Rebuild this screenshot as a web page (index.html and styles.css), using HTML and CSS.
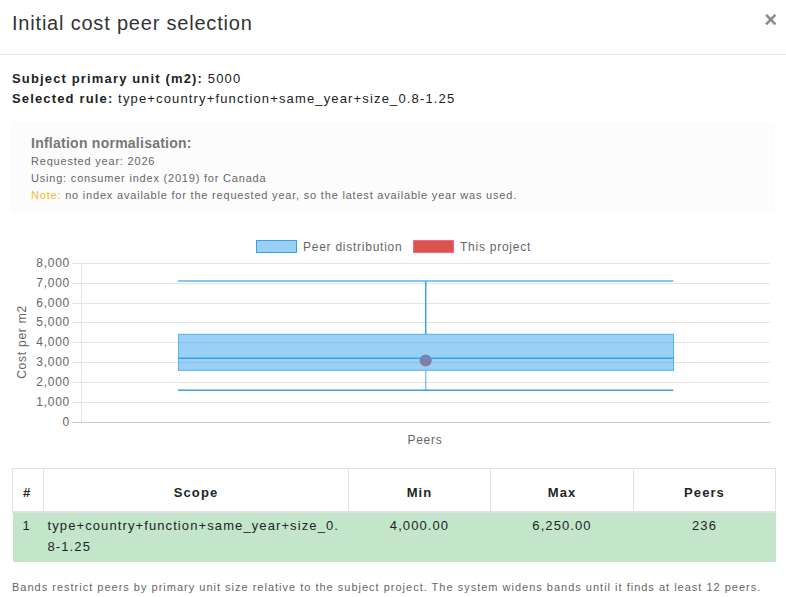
FILE: index.html
```html
<!DOCTYPE html>
<html>
<head>
<meta charset="utf-8">
<link rel="stylesheet" href="styles.css">
</head>
<body>
<div class="modal">
  <div class="modal-header">
    <h4 class="modal-title">Initial cost peer selection</h4>
    <span class="close">&times;</span>
  </div>
  <div class="modal-body">
    <div class="info-line"><b>Subject primary unit (m2):</b> 5000</div>
    <div class="info-line"><b>Selected rule:</b> type+country+function+same_year+size_0.8-1.25</div>

    <div class="inflation">
      <div class="infl-title">Inflation normalisation:</div>
      <div class="infl-line">Requested year: 2026</div>
      <div class="infl-line">Using: consumer index (2019) for Canada</div>
      <div class="infl-line"><span class="note">Note:</span> no index available for the requested year, so the latest available year was used.</div>
    </div>

    <svg class="chart" width="764" height="220" viewBox="0 0 764 220">
      <g class="legend">
        <rect x="244.5" y="10.5" width="40" height="12" fill="#9bd0f5" stroke="#36a2eb" stroke-width="1"/>
        <text x="291" y="20.5">Peer distribution</text>
        <rect x="401.5" y="10.5" width="40" height="12" fill="#d9534f" stroke="#ff6384" stroke-width="1"/>
        <text x="448" y="20.5">This project</text>
      </g>
      <g class="grid" stroke="#e5e5e5" stroke-width="1">
        <line x1="60" y1="33.5" x2="758" y2="33.5"/>
        <line x1="60" y1="53.5" x2="758" y2="53.5"/>
        <line x1="60" y1="73.5" x2="758" y2="73.5"/>
        <line x1="60" y1="92.5" x2="758" y2="92.5"/>
        <line x1="60" y1="112.5" x2="758" y2="112.5"/>
        <line x1="60" y1="132.5" x2="758" y2="132.5"/>
        <line x1="60" y1="152.5" x2="758" y2="152.5"/>
        <line x1="60" y1="172.5" x2="758" y2="172.5"/>
        <line x1="69.5" y1="33" x2="69.5" y2="192"/>
      </g>
      <line x1="60" y1="192.5" x2="758" y2="192.5" stroke="#cccccc" stroke-width="1"/>
      <g class="ylabels">
        <text x="58" y="37">8,000</text>
        <text x="58" y="57">7,000</text>
        <text x="58" y="77">6,000</text>
        <text x="58" y="96">5,000</text>
        <text x="58" y="116">4,000</text>
        <text x="58" y="136">3,000</text>
        <text x="58" y="156">2,000</text>
        <text x="58" y="176">1,000</text>
        <text x="58" y="196">0</text>
      </g>
      <text class="ytitle" transform="translate(14,112) rotate(-90)" x="0" y="0">Cost per m2</text>
      <text class="xtitle" x="413" y="214">Peers</text>

      <circle cx="413.7" cy="130.5" r="6" fill="#d9534f"/>
      <g class="box">
        <line x1="166" y1="51" x2="661.5" y2="51" stroke="#36a2eb" stroke-width="2" stroke-opacity="0.6"/>
        <line x1="413.7" y1="51" x2="413.7" y2="104.3" stroke="#36a2eb" stroke-width="1.5"/>
        <line x1="413.7" y1="140.3" x2="413.7" y2="160.3" stroke="#36a2eb" stroke-width="1.5" stroke-opacity="0.6"/>
        <rect x="166.5" y="104.3" width="495" height="36" fill="rgba(54,162,235,0.5)" stroke="#36a2eb" stroke-width="1" stroke-opacity="0.8"/>
        <line x1="166.5" y1="128.3" x2="661.5" y2="128.3" stroke="#36a2eb" stroke-width="1.5"/>
        <line x1="166" y1="160.3" x2="661.5" y2="160.3" stroke="#36a2eb" stroke-width="1.5"/>
      </g>
    </svg>

    <table class="peers">
      <thead>
        <tr>
          <th class="c-num">#</th>
          <th class="c-scope">Scope</th>
          <th class="c-min">Min</th>
          <th class="c-max">Max</th>
          <th class="c-peers">Peers</th>
        </tr>
      </thead>
      <tbody>
        <tr class="selected">
          <td class="c-num">1</td>
          <td class="c-scope scope-text">type+country+function+same_year+size_0.8-1.25</td>
          <td class="center">4,000.00</td>
          <td class="center">6,250.00</td>
          <td class="center">236</td>
        </tr>
      </tbody>
    </table>

    <p class="footnote">Bands restrict peers by primary unit size relative to the subject project. The system widens bands until it finds at least 12 peers.</p>
  </div>
</div>
</body>
</html>
```

FILE: styles.css
```css
* { box-sizing: border-box; }
html, body { margin: 0; padding: 0; background: #fff; }
body {
  font-family: "Liberation Sans", Arial, sans-serif;
  color: #212529;
  width: 786px;
  height: 597px;
  overflow: hidden;
}
.modal { width: 786px; }
.modal-header {
  display: flex;
  justify-content: space-between;
  align-items: flex-start;
  padding: 8px 9px 15px 12px;
  border-bottom: 1px solid #e5e5e5;
  height: 55px;
}
.modal-title {
  margin: 0;
  font-family: "Liberation Sans", Arial, sans-serif;
  font-weight: 400;
  font-size: 20px;
  line-height: 30px;
  color: #333;
  letter-spacing: 0.8px;
}
.close {
  font-family: "Liberation Sans", Arial, sans-serif;
  font-weight: 700;
  font-size: 22px;
  line-height: 24px;
  color: #8a8a8a;
}
.modal-body { padding: 14px 12px 0 12px; }
.info-line {
  font-size: 13px;
  line-height: 20px;
  letter-spacing: 1.15px;
  color: #222;
}
.info-line b { font-weight: 700; }
.inflation {
  margin-top: 13px;
  margin-left: -1px;
  width: 764px;
  background: #fcfcfc;
  padding: 12px 20px 9px 20px;
  color: #666;
}
.infl-title {
  font-weight: 700;
  font-size: 14px;
  line-height: 19px;
  letter-spacing: 0.25px;
  color: #777;
}
.infl-line {
  font-size: 11px;
  line-height: 17px;
  letter-spacing: 0.8px;
  color: #666;
}
.note { color: #f5b82e; }
.chart {
  display: block;
  margin-top: 17px;
  font-family: "Liberation Sans", Arial, sans-serif;
}
.legend text, .ylabels text, .ytitle, .xtitle {
  font-size: 12px;
  fill: #666;
  letter-spacing: 0.75px;
}
.ylabels text { text-anchor: end; }
.ytitle, .xtitle { text-anchor: middle; }
.peers {
  margin-top: 18px;
  width: 764px;
  border-collapse: collapse;
  table-layout: fixed;
  font-size: 13px;
  letter-spacing: 1.1px;
}
.peers th {
  border: 1px solid #dee2e6;
  border-bottom: 2px solid #dee2e6;
  font-weight: 700;
  height: 43px;
  padding: 0 8px 9px 8px;
  line-height: 18px;
  vertical-align: bottom;
  color: #212529;
  text-align: center;
}
.peers th.c-num { text-align: left; padding-left: 10px; }
.c-num { width: 31px; }
.c-scope { width: 305px; }
.c-min { width: 142px; }
.c-max { width: 143px; }
.peers td {
  padding: 2px 4px 5px 4px;
  line-height: 21px;
  vertical-align: top;
  color: #212529;
}
.peers td.c-num { padding-left: 10px; }
.scope-text { word-break: break-all; }
.peers .center { text-align: center; }
.selected td { background: #c3e6cb; }
.footnote {
  margin: 17px 0 0 0;
  font-size: 11px;
  line-height: 16px;
  letter-spacing: 1.0px;
  color: #666;
}
```
